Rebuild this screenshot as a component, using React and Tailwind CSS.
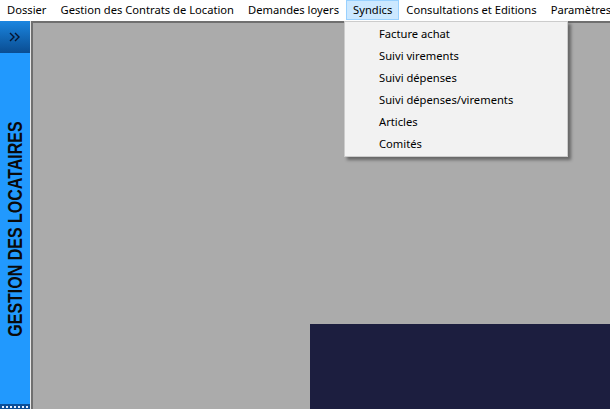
import React from "react";

const menu = ["Dossier", "Gestion des Contrats de Location", "Demandes loyers", "Syndics", "Consultations et Editions", "Paramètres"];
const items = ["Facture achat", "Suivi virements", "Suivi dépenses", "Suivi dépenses/virements", "Articles", "Comités"];

export default function App() {
  return (
    <div className="relative w-[610px] h-[409px] overflow-hidden bg-white flex flex-col text-[11.2px] text-black" style={{ fontFamily: '"Noto Sans", sans-serif' }}>
      {/* Menu bar */}
      <div className="h-[21px] flex items-start bg-white shrink-0 overflow-hidden">
        {menu.map((m) => (
          <div
            key={m}
            className={
              "h-[20px] shrink-0 flex items-center px-[6px] whitespace-nowrap leading-none border " +
              (m === "Syndics" ? "bg-[#cce8ff] border-[#99d1ff]" : "border-transparent")
            }
          >
            {m}
          </div>
        ))}
      </div>

      {/* Body */}
      <div className="flex flex-1 min-h-0">
        {/* Sidebar */}
        <div className="w-[30px] flex flex-col shrink-0 bg-[#2199fe]">
          <div className="h-[32px] shrink-0 flex items-center justify-center bg-gradient-to-b from-[#1b86e0] to-[#0a4d92]">
            <svg width="12" height="10" viewBox="0 0 12 10" fill="none" stroke="#06142e" strokeWidth="1.4">
              <path d="M1 1 L5 5 L1 9" />
              <path d="M6 1 L10 5 L6 9" />
            </svg>
          </div>
          <div className="flex-1 flex items-center justify-center overflow-visible">
            <span
              className="whitespace-nowrap font-bold text-[16px] leading-none text-[#0a0a0a] [transform:translateX(1px)_rotate(-90deg)_scaleY(1.22)]"
              style={{ fontFamily: '"Liberation Sans", Arial, sans-serif' }}
            >
              GESTION DES LOCATAIRES
            </span>
          </div>
          <div className="h-[5px] shrink-0 bg-[#0d4f98] flex items-center justify-start gap-[2px] pl-[2px]">
            {Array.from({ length: 7 }).map((_, i) => (
              <div key={i} className="w-[2px] h-[2px] bg-[#e8f0ff]" />
            ))}
          </div>
        </div>

        {/* Main area */}
        <div className="flex-1 border-l border-[#e6e6e6] flex">
          <div className="flex-1 bg-[#ababab] border-t-2 border-l-2 border-[#6f6f6f] flex flex-col justify-end items-end">
            <div className="w-[300px] h-[85px] bg-[#1c1e3f]" />
          </div>
        </div>
      </div>

      {/* Dropdown */}
      <div className="absolute left-[344px] top-[21px] w-[224px] bg-[#f2f2f2] border border-[#cccccc] py-[1px] shadow-[3px_3px_3px_rgba(0,0,0,0.4)]">
        {items.map((it) => (
          <div key={it} className="h-[22px] flex items-center pl-[34px] whitespace-nowrap">
            {it}
          </div>
        ))}
      </div>
    </div>
  );
}
